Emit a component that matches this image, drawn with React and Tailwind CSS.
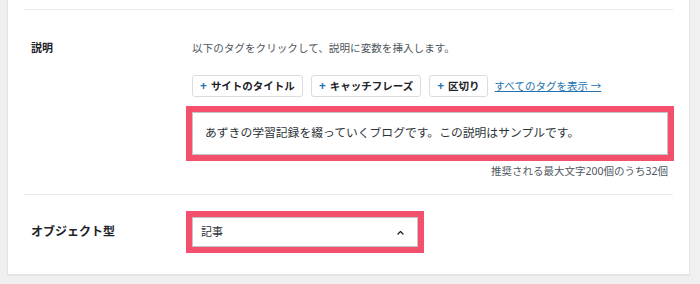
import React from 'react';

const tags = ['サイトのタイトル', 'キャッチフレーズ', '区切り'];

const TagButton = ({ label }) => (
  <button
    type="button"
    className="flex h-[22px] items-center gap-[4px] rounded-[3px] border border-[#dcdcde] bg-white px-[7px] text-[10.5px] font-bold leading-none text-[#1d2327]"
  >
    <span className="text-[12px] text-[#2271b1]">+</span>
    <span>{label}</span>
  </button>
);

const App = () => {
  return (
    <div className="h-[284px] w-[700px] overflow-hidden bg-[#f0f0f1] pl-[7px] pr-[10px] font-['Noto_Sans','Noto_Sans_CJK_JP',sans-serif]">
      <div className="h-[275px] border-x border-b border-[#e3e4e6] bg-white px-[16px] pt-[9px] shadow-[0_1px_1px_rgba(0,0,0,0.04)]">
        <div className="flex border-t border-[#ebebec] pb-[15px] pl-[7px] pr-[5px] pt-[30px]">
          <div className="w-[161px] text-[11px] font-semibold leading-[16px] text-[#1d2327]">説明</div>
          <div className="flex-1">
            <p className="text-[10.6px] leading-[16px] text-[#50575e]">
              以下のタグをクリックして、説明に変数を挿入します。
            </p>
            <div className="mt-[19px] flex items-center gap-[8px]">
              {tags.map((t) => (
                <TagButton key={t} label={t} />
              ))}
              <a href="#" className="ml-[-1px] text-[10.5px] leading-none text-[#2271b1] underline">
                すべてのタグを表示 →
              </a>
            </div>
            <div className="mt-[15px] flex h-[43px] items-center border border-[#c3c4c7] pb-[2px] pl-[12px] text-[11.8px] text-[#2c3338] shadow-[0_0_0_6px_#f4506e]">
              あずきの学習記録を綴っていくブログです。この説明はサンプルです。
            </div>
            <p className="mt-[8px] text-right text-[10.5px] leading-[16px] text-[#50575e]">
              推奨される最大文字200個のうち32個
            </p>
          </div>
        </div>
        <div className="flex items-center border-t border-[#ebebec] pl-[7px] pr-[5px] pt-[22px]">
          <div className="w-[161px] text-[12px] font-semibold leading-[16px] text-[#1d2327]">オブジェクト型</div>
          <div className="flex h-[30px] w-[226px] items-center justify-between border border-[#c3c4c7] pl-[8px] pr-[13px] text-[11px] text-[#2c3338] shadow-[0_0_0_6px_#f4506e]">
            <span>記事</span>
            <svg width="7" height="5" viewBox="0 0 7 5" fill="none">
              <polyline points="1,4 3.5,1.5 6,4" stroke="#1d2327" strokeWidth="1.3" strokeLinecap="round" strokeLinejoin="round" />
            </svg>
          </div>
        </div>
      </div>
    </div>
  );
};

export default App;
